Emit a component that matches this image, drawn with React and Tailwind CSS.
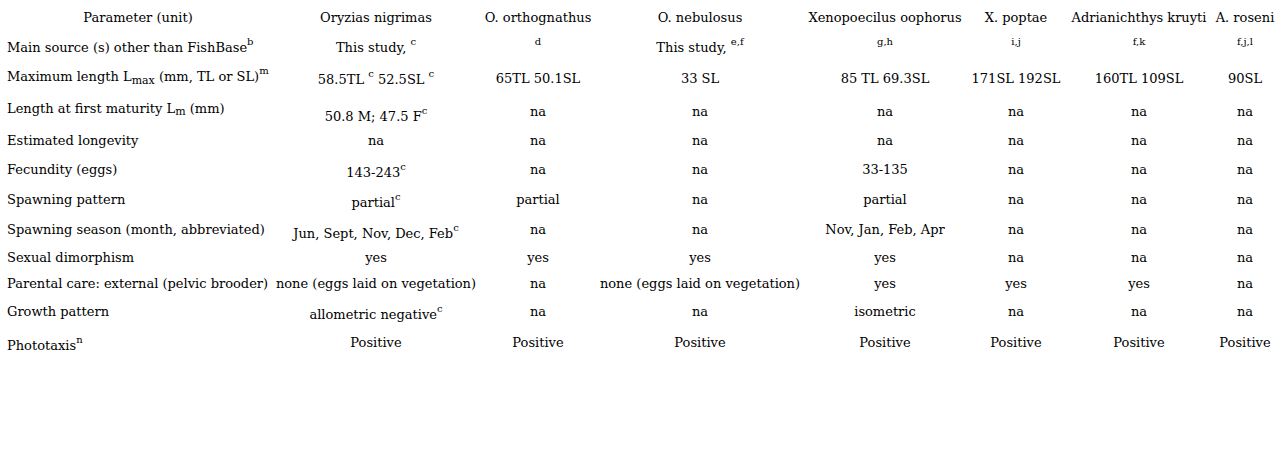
import React from 'react';

const S = ({ children }) => <sup className="static text-[10px] leading-none align-[7px]">{children}</sup>;
const B = ({ children }) => <sub className="text-[11px]">{children}</sub>;

const species = ['Oryzias nigrimas', 'O. orthognathus', 'O. nebulosus', 'Xenopoecilus oophorus', 'X. poptae', 'Adrianichthys kruyti', 'A. roseni'];
const widths = ['w-[266px]', 'w-[210px]', 'w-[114px]', 'w-[210px]', 'w-[160px]', 'w-[102px]', 'w-[144px]', 'w-[68px]'];

// lab / pad: extra padding classes nudging the label cell and the given value cells
const rows = [
    { h: 'h-[30px]', label: <>Main source (s) other than FishBase<S>b</S></>, cells: [<>This study, <S>c</S></>, <S>d</S>, <>This study, <S>e,f</S></>, <S>g,h</S>, <S>i,j</S>, <S>f,k</S>, <S>f,j,l</S>] },
    { h: 'h-[34px]', lab: 'pb-[6px]', label: <>Maximum length L<B>max</B> (mm, TL or SL)<S>m</S></>, cells: [<>58.5TL <S>c</S> 52.5SL <S>c</S></>, '65TL 50.1SL', '33 SL', '85 TL 69.3SL', '171SL 192SL', '160TL 109SL', '90SL'] },
    { h: 'h-[32px]', lab: 'pb-[6px]', pad: { 0: 'pt-[8px]' }, label: <>Length at first maturity L<B>m</B> (mm)</>, cells: [<>50.8 M; 47.5 F<S>c</S></>, 'na', 'na', 'na', 'na', 'na', 'na'] },
    { h: 'h-[27px]', label: 'Estimated longevity', cells: ['na', 'na', 'na', 'na', 'na', 'na', 'na'] },
    { h: 'h-[30px]', pad: { 0: 'pt-[4px]' }, label: 'Fecundity (eggs)', cells: [<>143-243<S>c</S></>, 'na', 'na', '33-135', 'na', 'na', 'na'] },
    { h: 'h-[30px]', pad: { 0: 'pt-[4px]' }, label: 'Spawning pattern', cells: [<>partial<S>c</S></>, 'partial', 'na', 'partial', 'na', 'na', 'na'] },
    { h: 'h-[31px]', pad: { 0: 'pt-[4px]' }, label: 'Spawning season (month, abbreviated)', cells: [<>Jun, Sept, Nov, Dec, Feb<S>c</S></>, 'na', 'na', 'Nov, Jan, Feb, Apr', 'na', 'na', 'na'] },
    { h: 'h-[25px]', label: 'Sexual dimorphism', cells: ['yes', 'yes', 'yes', 'yes', 'na', 'na', 'na'] },
    { h: 'h-[26px]', label: 'Parental care: external (pelvic brooder)', cells: ['none (eggs laid on vegetation)', 'na', 'none (eggs laid on vegetation)', 'yes', 'yes', 'yes', 'na'] },
    { h: 'h-[30px]', pad: { 0: 'pt-[4px]' }, label: 'Growth pattern', cells: [<>allometric negative<S>c</S></>, 'na', 'na', 'isometric', 'na', 'na', 'na'] },
    { h: 'h-[32px]', lab: 'pt-[4px]', label: <>Phototaxis<S>n</S></>, cells: ['Positive', 'Positive', 'Positive', 'Positive', 'Positive', 'Positive', 'Positive'] },
];

export default function App() {
    return (
        <div className="w-[1284px] h-[464px] bg-white text-black text-[13px] leading-[15px] overflow-hidden pl-[5px] pt-[3px]" style={{ fontFamily: '"DejaVu Serif", serif' }}>
            <table className="table-fixed border-collapse">
                <colgroup>
                    {widths.map((w, i) => <col key={i} className={w} />)}
                </colgroup>
                <thead>
                    <tr className="h-[28px]">
                        <th className="font-normal text-center align-middle p-0">Parameter (unit)</th>
                        {species.map(s => (
                            <th key={s} className="font-normal text-center align-middle p-0 whitespace-nowrap">{s}</th>
                        ))}
                    </tr>
                </thead>
                <tbody>
                    {rows.map((r, i) => (
                        <tr key={i} className={r.h}>
                            <td className={`text-left align-middle pl-[2px] whitespace-nowrap ${r.lab || ''}`}>{r.label}</td>
                            {r.cells.map((c, j) => (
                                <td key={j} className={`text-center align-middle whitespace-nowrap ${(r.pad && r.pad[j]) || ''}`}>{c}</td>
                            ))}
                        </tr>
                    ))}
                </tbody>
            </table>
        </div>
    );
}
